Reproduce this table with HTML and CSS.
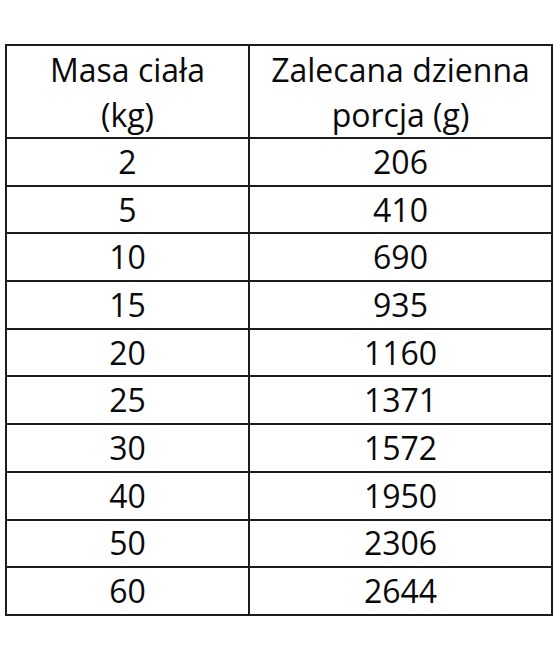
FILE: index.html
```html
<!DOCTYPE html>
<html lang="pl">
<head>
<meta charset="utf-8">
<link rel="stylesheet" href="styles.css">
</head>
<body>
<table class="portion-table">
  <thead>
    <tr>
      <th class="col-mass">Masa ciała<br>(kg)</th>
      <th class="col-portion">Zalecana dzienna<br>porcja (g)</th>
    </tr>
  </thead>
  <tbody>
    <tr><td>2</td><td>206</td></tr>
    <tr><td>5</td><td>410</td></tr>
    <tr><td>10</td><td>690</td></tr>
    <tr><td>15</td><td>935</td></tr>
    <tr><td>20</td><td>1160</td></tr>
    <tr><td>25</td><td>1371</td></tr>
    <tr><td>30</td><td>1572</td></tr>
    <tr><td>40</td><td>1950</td></tr>
    <tr><td>50</td><td>2306</td></tr>
    <tr><td>60</td><td>2644</td></tr>
  </tbody>
</table>
</body>
</html>
```
FILE: styles.css
```css
html, body {
  margin: 0;
  padding: 0;
  background: #ffffff;
}
body {
  padding: 44px 0 0 5px;
  font-family: "Open Sans", "Noto Sans", sans-serif;
  color: #0a0a0a;
}
.portion-table {
  border-collapse: collapse;
  width: 548px;
  table-layout: fixed;
}
.portion-table th,
.portion-table td {
  border: 2px solid #1c1c1c;
  padding: 0;
  text-align: center;
  font-weight: 400;
  font-size: 32px;
  vertical-align: middle;
}
.col-mass { width: 241px; }
.portion-table th {
  height: 91px;
  line-height: 45px;
}
.portion-table td {
  height: 45.7px;
  line-height: 40px;
}
```
